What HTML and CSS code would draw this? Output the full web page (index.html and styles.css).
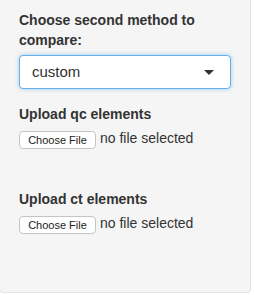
FILE: index.html
```html
<!DOCTYPE html>
<html lang="en">
<head>
    <meta charset="UTF-8">
    <title>Compare methods</title>
    <link rel="stylesheet" href="styles.css">
</head>
<body>
<div class="well">
    <div class="form-group">
        <label class="control-label">Choose second method to compare:</label>
        <div class="select-box">
            <span>custom</span>
            <span class="caret"></span>
        </div>
    </div>

    <div class="form-group file-group">
        <label class="control-label">Upload qc elements</label>
        <div class="file-row">
            <span class="file-btn">Choose File</span>
            <span class="file-name">no file selected</span>
        </div>
    </div>

    <div class="form-group file-group">
        <label class="control-label">Upload ct elements</label>
        <div class="file-row">
            <span class="file-btn">Choose File</span>
            <span class="file-name">no file selected</span>
        </div>
    </div>
</div>
</body>
</html>
```

FILE: styles.css
```css
/* sidebar panel, bootstrap-ish */
body {
    margin: 0;
    font-family: "Liberation Sans", Arial, sans-serif;
    font-size: 14px;
    line-height: 20px;
    color: #333;
    background: #fff;
}
.well {
    width: 212px;
    margin: -10px 0 0 -1px;
    padding: 19px;
    background: #f5f5f5;
    border: 1px solid #e3e3e3;
    border-radius: 4px;
}
.form-group {
    margin-bottom: 15px;
}
.file-group {
    margin-bottom: 0;
    padding-bottom: 39px;
}
.well .form-group:last-child {
    padding-bottom: 38px;
}
.control-label {
    display: block;
    font-weight: bold;
    margin-bottom: 5px;
}
.select-box {
    display: flex;
    justify-content: space-between;
    align-items: center;
    height: 34px;
    box-sizing: border-box;
    padding: 0 16px 0 12px;
    background: #fff;
    border: 1px solid #66afe9;
    border-radius: 4px;
    box-shadow: 0 0 4px rgba(102, 175, 233, 0.6);
    font-size: 15px;
}
.caret {
    width: 0;
    height: 0;
    border-left: 5px solid transparent;
    border-right: 5px solid transparent;
    border-top: 5px solid #333;
    margin-top: 1px;
}
.file-row {
    display: flex;
    align-items: center;
    height: 21px;
}
.file-btn {
    display: inline-block;
    height: 17px;
    line-height: 16px;
    padding: 0 6px;
    box-sizing: border-box;
    height: 18px;
    width: 77px;
    text-align: center;
    background: #fff;
    border: 1px solid #c4c4c4;
    border-radius: 4px;
    font-size: 11px;
    color: #222;
    margin-top: 1px;
}
.file-name {
    margin-left: 4px;
    font-size: 14px;
    margin-top: -4px;
}
```
